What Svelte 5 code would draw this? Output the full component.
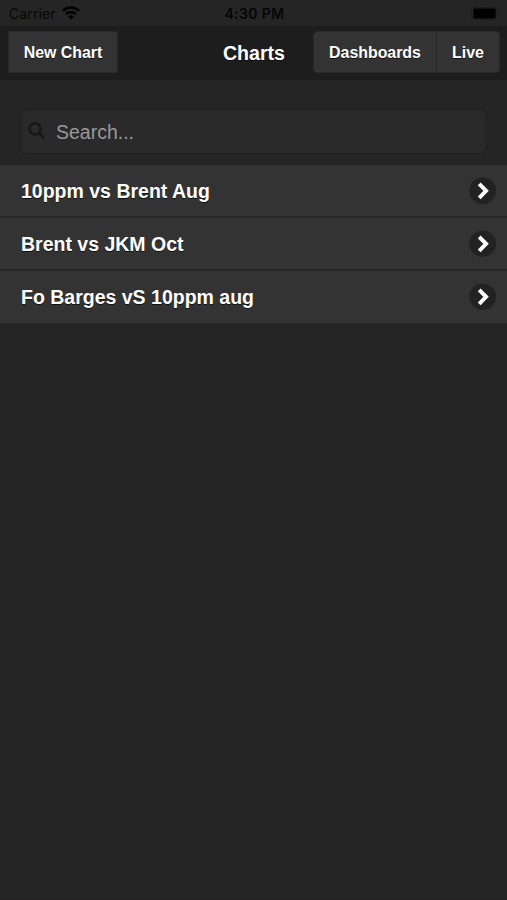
<script>
  const charts = ['10ppm vs Brent Aug', 'Brent vs JKM Oct', 'Fo Barges vS 10ppm aug'];
</script>

<div class="screen">
  <div class="status">
    <div class="carrier">
      <span>Carrier</span>
      <svg width="18" height="14" viewBox="0 0 18 14" fill="none" stroke="#000" stroke-width="2.6">
        <path d="M1 4.9C5.4.3 12.6.3 17 4.9" />
        <path d="M4 8.1c2.8-2.7 7.2-2.7 10 0" />
        <path d="M6.1 10.4c1.6-1.6 4.2-1.6 5.8 0L9 13.4z" fill="#000" stroke="none" />
      </svg>
    </div>
    <time>4:30 PM</time>
    <div class="battery">
      <svg width="30" height="14" viewBox="0 0 30 14">
        <rect x=".5" y=".5" width="26" height="12" rx="3.5" fill="none" stroke="#1d1d1d" />
        <rect x="2.3" y="1.6" width="22.4" height="9.8" rx="1.6" fill="#000" />
        <path d="M28 4.5q1.5 2 0 4z" fill="#1d1d1d" />
      </svg>
    </div>
  </div>

  <header>
    <div class="side"><button class="new">New Chart</button></div>
    <h1>Charts</h1>
    <div class="side right">
      <button class="dash">Dashboards</button>
      <button class="live">Live</button>
    </div>
  </header>

  <div class="search">
    <svg width="18" height="18" viewBox="0 0 18 18" fill="none" stroke="#161616" stroke-width="2.2">
      <circle cx="7" cy="7" r="5.6" />
      <path d="M11 11 16 16" stroke-width="2.6" />
    </svg>
    <input type="text" placeholder="Search..." />
  </div>

  <ul>
    {#each charts as chart}
      <li>
        <span>{chart}</span>
        <svg width="28" height="28" viewBox="0 0 28 28">
          <circle cx="13.7" cy="13.7" r="13.3" fill="#222" />
          <path d="M10.2 6.8 17.1 13.8 10.2 20.8" fill="none" stroke="#fff" stroke-width="3.9" />
        </svg>
      </li>
    {/each}
  </ul>
</div>

<style>
  :global(body) { background: #252525; }
  .screen {
    box-sizing: border-box;
    height: 900px;
    background: #252525;
    border-bottom: 1px solid #2a1d22;
    font-family: "Liberation Sans", Arial, sans-serif;
    color: #fff;
    overflow: hidden;
  }
  .status {
    height: 26px;
    display: grid;
    grid-template-columns: 1fr auto 1fr;
    align-items: center;
    padding: 1px 7px 0 9px;
    box-sizing: border-box;
    color: #060606;
    font: 14px/24px Inter, sans-serif;
  }
  .carrier { display: flex; align-items: center; gap: 6px; letter-spacing: 0.1px; }
  .carrier svg { margin-top: -2px; }
  time { font-weight: 600; font-size: 14px; letter-spacing: 0.4px; }
  .battery { display: flex; justify-content: flex-end; }
  .battery svg { margin-right: -1px; }
  header {
    height: 54px;
    box-sizing: border-box;
    display: grid;
    grid-template-columns: 1fr auto 1fr;
    align-items: center;
    padding: 0 7px 2px 8px;
    background: #1d1d1d;
  }
  .side { display: flex; }
  .right { justify-content: flex-end; }
  h1 {
    margin: 2px 0 0;
    font-size: 19.6px;
    line-height: 24px;
    text-shadow: 0 1px 0 #111;
  }
  button {
    box-sizing: border-box;
    height: 42px;
    border: 1px solid #292929;
    background: #333;
    color: #fff;
    font: bold 15.9px "Liberation Sans", Arial, sans-serif;
    text-shadow: 0 1px 0 #111;
  }
  .new { width: 110px; padding: 2px 0 0; }
  .dash { width: 124px; border-radius: 4px 0 0 4px; padding: 2px 0 0; }
  .live { width: 63px; border-left: 0; border-radius: 0 4px 4px 0; padding: 2px 0 0; }
  .search {
    display: flex;
    align-items: center;
    height: 46px;
    box-sizing: border-box;
    margin: 28px 20px 11px;
    padding-left: 7px;
    gap: 10px;
    border: 1px solid #202020;
    border-radius: 6px;
    background: #2a2a2a;
    box-shadow: inset 0 1px 3px #222;
  }
  input {
    flex: 1;
    min-width: 0;
    padding: 2px 0 0;
    border: 0;
    outline: 0;
    background: transparent;
    color: #fff;
    font: 19.5px "Liberation Sans", Arial, sans-serif;
  }
  input::placeholder { color: #999; opacity: 1; }
  ul { list-style: none; margin: 0; padding: 0; }
  li {
    display: flex;
    justify-content: space-between;
    align-items: center;
    height: 53px;
    box-sizing: border-box;
    padding: 0 10px 0 21px;
    background: #333;
    border-bottom: 2px solid #272727;
    font-size: 19.5px;
    font-weight: bold;
    text-shadow: 0 1px 0 #111;
  }
  li span { padding-top: 2px; }
  li:last-child { border-bottom-width: 1px; padding-bottom: 1px; }
</style>
